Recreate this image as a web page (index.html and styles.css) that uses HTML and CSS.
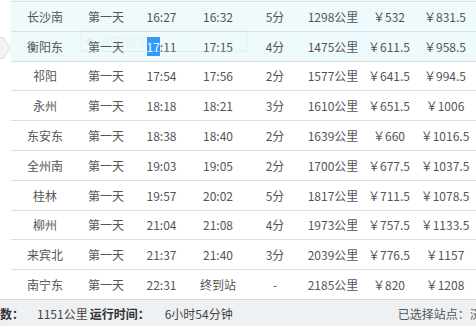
FILE: index.html
```html
<!DOCTYPE html>
<html lang="zh">
<head>
<meta charset="utf-8">
<link rel="stylesheet" href="styles.css">
</head>
<body>
<div class="page">
  <div class="list">
    <div class="topstrip"></div>
    <div class="row hl"><span>长沙南</span><span>第一天</span><span>16:27</span><span>16:32</span><span>5分</span><span>1298公里</span><span>￥532</span><span>￥831.5</span><span></span></div>
    <div class="row hl"><span>衡阳东</span><span>第一天</span><span><mark class="sel">17</mark>:11</span><span>17:15</span><span>4分</span><span>1475公里</span><span>￥611.5</span><span>￥958.5</span><span></span></div>
    <div class="row"><span>祁阳</span><span>第一天</span><span>17:54</span><span>17:56</span><span>2分</span><span>1577公里</span><span>￥641.5</span><span>￥994.5</span><span></span></div>
    <div class="row"><span>永州</span><span>第一天</span><span>18:18</span><span>18:21</span><span>3分</span><span>1610公里</span><span>￥651.5</span><span>￥1006</span><span></span></div>
    <div class="row"><span>东安东</span><span>第一天</span><span>18:38</span><span>18:40</span><span>2分</span><span>1639公里</span><span>￥660</span><span>￥1016.5</span><span></span></div>
    <div class="row"><span>全州南</span><span>第一天</span><span>19:03</span><span>19:05</span><span>2分</span><span>1700公里</span><span>￥677.5</span><span>￥1037.5</span><span></span></div>
    <div class="row"><span>桂林</span><span>第一天</span><span>19:57</span><span>20:02</span><span>5分</span><span>1817公里</span><span>￥711.5</span><span>￥1078.5</span><span></span></div>
    <div class="row"><span>柳州</span><span>第一天</span><span>21:04</span><span>21:08</span><span>4分</span><span>1973公里</span><span>￥757.5</span><span>￥1133.5</span><span></span></div>
    <div class="row"><span>来宾北</span><span>第一天</span><span>21:37</span><span>21:40</span><span>3分</span><span>2039公里</span><span>￥776.5</span><span>￥1157</span><span></span></div>
    <div class="row"><span>南宁东</span><span>第一天</span><span>22:31</span><span>终到站</span><span>-</span><span>2185公里</span><span>￥820</span><span>￥1208</span><span></span></div>
  </div>
  <div class="footer">
    <b class="lbl first">里程数：</b><span class="val v1">1151公里</span>
    <b class="lbl">运行时间：</b><span class="val v2">6小时54分钟</span>
    <span class="sel-station">已选择站点：济南西</span>
  </div>

  <svg class="pointer" width="14" height="26" viewBox="0 0 14 26">
    <path d="M-1 0.5 H3 L10.5 11 L3 21.5 H-1 Z" fill="#f4f4f4" stroke="#dcdcdc" stroke-width="1"/>
  </svg>
  <div class="ghost"><span class="ghost-dot"></span><span class="ghost-text">矩形截图(R)</span></div>
</div>
</body>
</html>
```
FILE: styles.css
```css
html, body {
  margin: 0;
  padding: 0;
  background: #fff;
  overflow: hidden;
}
.page {
  position: relative;
  width: 476px;
  height: 326px;
  overflow: hidden;
  font-family: "Noto Sans CJK SC", "Microsoft YaHei", sans-serif;
  font-size: 12px;
  color: #555;
}
.list {
  padding-left: 11px;
  width: 560px;
}
.topstrip {
  height: 1px;
  background: #eefafb;
}
.row {
  display: grid;
  grid-template-columns: 68px 54px 57px 56px 58px 58px 54px 58px 80px;
  box-sizing: border-box;
  height: 29.8px;
  border-top: 1px solid #dcdfe0;
  align-items: center;
  text-align: center;
  white-space: nowrap;
}
.row.hl {
  background: #eefafb;
}
.sel {
  background: #3399ff;
  color: #fff;
  padding: 1px 0;
}
.footer {
  display: flex;
  align-items: center;
  box-sizing: border-box;
  height: 28px;
  border-top: 1px solid #d2d6da;
  background: #eef1f4;
  color: #333;
  white-space: nowrap;
  width: 700px;
}
.lbl {
  font-weight: bold;
}
.lbl.first {
  margin-left: -24px;
}
.val {
  color: #444;
}
.v1 {
  margin-left: 13px;
  margin-right: 2px;
}
.v2 {
  margin-left: 15px;
}
.sel-station {
  margin-left: 165px;
  color: #555;
}
.pointer {
  position: absolute;
  left: 0;
  top: 37px;
}
.ghost {
  position: absolute;
  left: 81px;
  top: 31px;
  width: 166px;
  height: 21px;
  box-sizing: border-box;
  border: 1px solid rgba(200, 215, 220, 0.3);
  display: flex;
  align-items: center;
  gap: 8px;
  padding-left: 4px;
  font-size: 12px;
  pointer-events: none;
}
.ghost-text {
  color: rgba(120, 140, 150, 0.09);
}
.ghost-dot {
  width: 7px;
  height: 7px;
  border-radius: 50%;
  background: rgba(120, 140, 150, 0.08);
}
```
